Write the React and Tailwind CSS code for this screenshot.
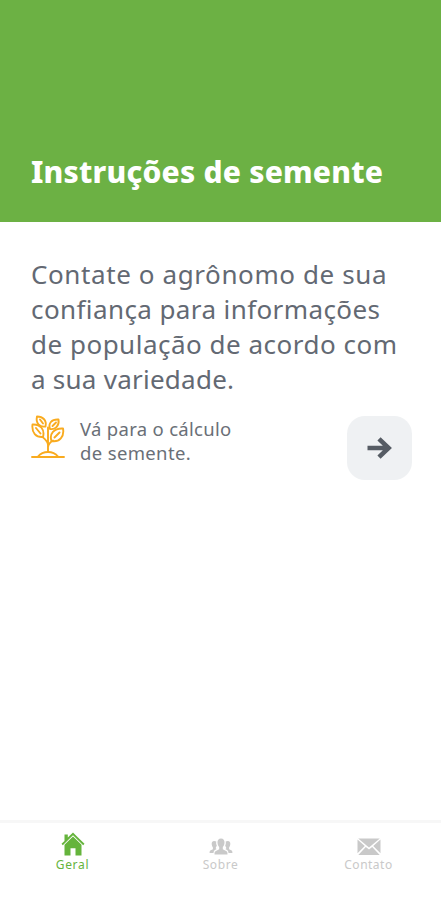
const SeedlingIcon = () => (
  <svg
    viewBox="0 0 34 44"
    className="w-[34px] h-[44px]"
    fill="none"
    stroke="#f9ab1f"
    strokeWidth="1.900"
    strokeLinecap="round"
    strokeLinejoin="round"
  >
    {/* Stem */}
    <path d="M17 37V12.500M17 29.500C16.500 26 14.500 24.500 11.500 22M17 32C17.500 28.500 19.500 27 22 25.500" />
    {/* Leaves */}
    <path d="M14.500 11.500C8.500 12.500 4.500 8 6 1.500C12 1.500 16 5.500 14.500 11.500ZM9 4.500L12 8.500" />
    <path d="M19 14C17 8.500 20.500 4 27.500 4.500C28.500 10.500 24.500 15 19 14ZM21.500 11L25 7.500" />
    <path d="M12 22C5 22.500 0.500 18 1.500 9.500C9.500 9 14 14.500 12 22ZM5 13L9.500 18.500" />
    <path d="M20.500 26C18 19 23 13 32 13.500C33.500 21.500 28.500 27.500 20.500 26ZM23.500 22.500L28.500 17.500" />
    {/* Ground */}
    <path d="M1 42H33M7 41.500C9.500 38.500 13 37 17 37S24.500 38.500 27 41.500" />
  </svg>
);

const ArrowIcon = () => (
  <svg
    viewBox="0 0 26 22"
    className="w-[26px] h-[22px]"
    fill="none"
    stroke="#565c64"
    strokeWidth="4.600"
  >
    <path d="M0.500 11H22M12 1.800L21.600 11L12 20.200" />
  </svg>
);

const PeopleIcon = () => (
  <svg viewBox="0 0 24 18" className="w-6 h-[18px]" fill="currentColor">
    <path d="M12 0.500C9.600 0.500 8.300 2.200 8.500 4.700C8.600 6.500 9.300 8 10.200 9V11.300L6.500 13.200C5.700 13.700 5.500 14.500 5.500 16.500H18.500C18.500 14.500 18.300 13.700 17.500 13.200L13.800 11.300V9C14.700 8 15.400 6.500 15.500 4.700C15.700 2.200 14.400 0.500 12 0.500Z" />
    <path d="M5.200 3C3.300 3 2.500 4.300 2.700 6.300C2.800 7.700 3.200 8.800 3.900 9.500V11.200L1.300 12.600C0.700 13 0.600 13.800 0.600 15H4.500C4.600 13.300 5 12.500 6 11.900L7.600 11L6.800 10.600V9.500C7.300 9 7.600 8.400 7.800 7.600C7.100 6.200 7 4.800 7.300 3.600C6.800 3.200 6.100 3 5.200 3Z" />
    <path d="M18.800 3C20.700 3 21.500 4.300 21.300 6.300C21.200 7.700 20.800 8.800 20.100 9.500V11.200L22.700 12.600C23.300 13 23.400 13.800 23.400 15H19.500C19.400 13.300 19 12.500 18 11.900L16.400 11L17.200 10.600V9.500C16.700 9 16.400 8.400 16.200 7.600C16.900 6.200 17 4.800 16.700 3.600C17.200 3.200 17.900 3 18.800 3Z" />
  </svg>
);

const HouseIcon = () => (
  <svg viewBox="0 0 24 24" className="w-6 h-6" fill="currentColor">
    <path d="M12 0.500L17 5.500L23.500 11.800L22.200 13.200L12 3.300L1.800 13.200L0.500 11.800L3.500 8.900V2.500H6.800V5.600Z" />
    <path d="M12 4.600L20.500 12.700V23.500H14.500V16.200H9.500V23.500H3.500V12.700Z" />
  </svg>
);

const MailIcon = () => (
  <svg viewBox="0 0 24 18" className="w-6 h-[18px]" fill="currentColor">
    <path d="M1.200 0.500H22.800L12 9.600Z" />
    <path d="M0.500 1.500L7.800 8L0.500 15.300ZM23.500 1.500L16.200 8L23.500 15.300Z" />
    <path d="M8.800 8.900L12 11.500L15.200 8.900L22.700 17H1.300Z" />
  </svg>
);

const tabs = [
  { label: "Geral", Icon: HouseIcon, color: "text-[#65b43c]", text: "tracking-[0.7px]" },
  { label: "Sobre", Icon: PeopleIcon, color: "text-[#c9c9c9]", text: "tracking-[0.6px]" },
  { label: "Contato", Icon: MailIcon, color: "text-[#c9c9c9]", text: "tracking-[0.5px]" },
];

const App = () => {
  return (
    <div className="flex h-[900px] w-[441px] flex-col overflow-hidden bg-white font-['Noto_Sans',sans-serif]">
      <header className="flex h-[222px] items-end bg-[#6cb144] pb-[28px] pl-[31px]">
        <h1 className="whitespace-nowrap text-[30px] font-extrabold leading-[44px] tracking-[0.2px] text-white">
          Instruções de semente
        </h1>
      </header>

      <main className="flex-1 pl-[31px] pr-[29px] pt-[35px]">
        <p className="whitespace-nowrap text-[26px] font-normal leading-[35px] text-[#636973]">
          <span className="block tracking-[0.6px]">Contate o agrônomo de sua</span>
          <span className="block tracking-[0.4px]">confiança para informações</span>
          <span className="block tracking-[0.5px]">de população de acordo com</span>
          <span className="block tracking-[0.25px]">a sua variedade.</span>
        </p>

        <div className="mt-[18px] flex items-start">
          <SeedlingIcon />
          <p className="ml-[15px] mt-[2px] flex-1 whitespace-nowrap text-[18.500px] font-normal leading-6 text-[#6a6f77]">
            <span className="block tracking-[0.3px]">Vá para o cálculo</span>
            <span className="block tracking-[0.35px]">de semente.</span>
          </p>
          <button className="mt-px flex h-16 w-[65px] items-center justify-center rounded-[18px] bg-[#eff1f3]">
            <ArrowIcon />
          </button>
        </div>
      </main>

      {/* Bottom tabs */}
      <nav className="grid h-[80px] grid-cols-[145px_151px_145px] border-t-[3px] border-[#f7f7f7]">
        {tabs.map(({ label, Icon, color, text }) => (
          <a key={label} className={`flex flex-col items-center pt-[9px] ${color}`}>
            <span className="flex h-6 items-end">
              <Icon />
            </span>
            <span className={`mt-px text-[12px] leading-4 ${text}`}>{label}</span>
          </a>
        ))}
      </nav>
    </div>
  );
};

export default App;
